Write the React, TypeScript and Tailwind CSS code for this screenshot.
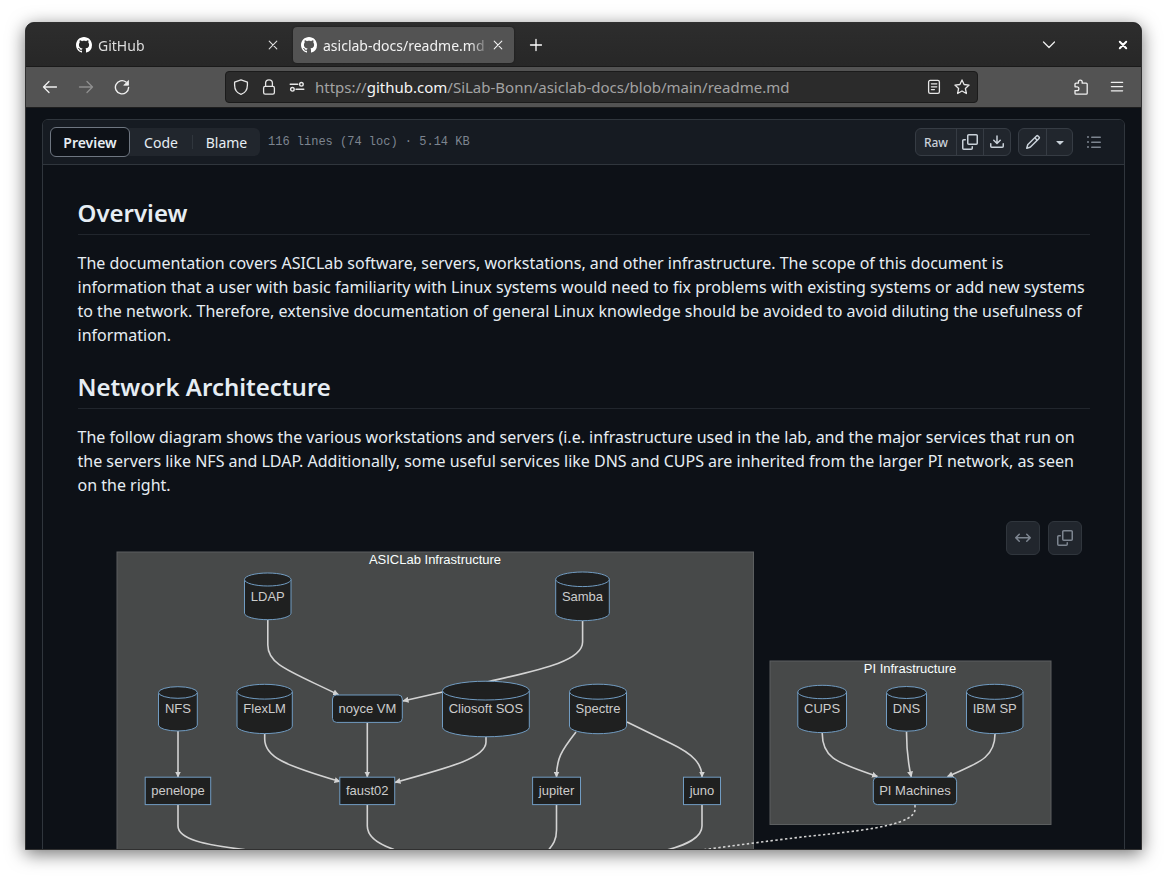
import type { ReactNode } from "react";

const OCTICONS = {
  github:
    "M8 0C3.58 0 0 3.58 0 8c0 3.54 2.29 6.53 5.47 7.59.4.07.55-.17.55-.38 0-.19-.01-.82-.01-1.49-2.01.37-2.53-.49-2.69-.94-.09-.23-.48-.94-.82-1.13-.28-.15-.68-.52-.01-.53.63-.01 1.08.58 1.23.82.72 1.21 1.87.87 2.33.66.07-.52.28-.87.51-1.07-1.78-.2-3.64-.89-3.64-3.95 0-.87.31-1.59.82-2.15-.08-.2-.36-1.02.08-2.12 0 0 .67-.21 2.2.82.64-.18 1.32-.27 2-.27.68 0 1.36.09 2 .27 1.53-1.04 2.2-.82 2.2-.82.44 1.1.16 1.92.08 2.12.51.56.82 1.27.82 2.15 0 3.07-1.87 3.75-3.65 3.95.29.25.54.73.54 1.48 0 1.07-.01 1.93-.01 2.2 0 .21.15.46.55.38A8.01 8.01 0 0 0 16 8c0-4.42-3.58-8-8-8z",
  copy: "M0 6.75C0 5.784.784 5 1.75 5h1.5a.75.75 0 0 1 0 1.5h-1.5a.25.25 0 0 0-.25.25v7.5c0 .138.112.25.25.25h7.5a.25.25 0 0 0 .25-.25v-1.5a.75.75 0 0 1 1.5 0v1.5A1.75 1.75 0 0 1 9.25 16h-7.5A1.75 1.75 0 0 1 0 14.25ZM5 1.75C5 .784 5.784 0 6.75 0h7.5C15.216 0 16 .784 16 1.75v7.5A1.75 1.75 0 0 1 14.25 11h-7.5A1.75 1.75 0 0 1 5 9.25Zm1.75-.25a.25.25 0 0 0-.25.25v7.5c0 .138.112.25.25.25h7.5a.25.25 0 0 0 .25-.25v-7.5a.25.25 0 0 0-.25-.25Z",
  download:
    "M2.75 14A1.75 1.75 0 0 1 1 12.25v-2.5a.75.75 0 0 1 1.5 0v2.5c0 .138.112.25.25.25h10.5a.25.25 0 0 0 .25-.25v-2.5a.75.75 0 0 1 1.5 0v2.5A1.75 1.75 0 0 1 13.25 14ZM7.25 7.689V2a.75.75 0 0 1 1.5 0v5.689l1.97-1.969a.749.749 0 1 1 1.06 1.06l-3.25 3.25a.749.749 0 0 1-1.06 0L4.22 6.78a.749.749 0 1 1 1.06-1.06l1.97 1.969Z",
  pencil:
    "M11.013 1.427a1.75 1.75 0 0 1 2.474 0l1.086 1.086a1.75 1.75 0 0 1 0 2.474l-8.61 8.61c-.21.21-.47.364-.756.445l-3.251.93a.75.75 0 0 1-.927-.928l.929-3.25c.081-.286.235-.547.445-.758l8.61-8.61Zm.176 4.823L9.75 4.81l-6.286 6.287a.253.253 0 0 0-.064.108l-.558 1.953 1.953-.558a.253.253 0 0 0 .108-.064Zm1.238-3.763a.25.25 0 0 0-.354 0L10.811 3.75l1.439 1.44 1.263-1.263a.25.25 0 0 0 0-.354Z",
  triangleDown:
    "m4.427 7.427 3.396 3.396a.25.25 0 0 0 .354 0l3.396-3.396A.25.25 0 0 0 11.396 7H4.604a.25.25 0 0 0-.177.427Z",
  list: "M5.75 2.5h8.5a.75.75 0 0 1 0 1.5h-8.5a.75.75 0 0 1 0-1.5Zm0 5h8.5a.75.75 0 0 1 0 1.5h-8.5a.75.75 0 0 1 0-1.5Zm0 5h8.5a.75.75 0 0 1 0 1.5h-8.5a.75.75 0 0 1 0-1.5ZM2 14a1 1 0 1 1 0-2 1 1 0 0 1 0 2Zm1-6a1 1 0 1 1-2 0 1 1 0 0 1 2 0ZM2 4a1 1 0 1 1 0-2 1 1 0 0 1 0 2Z",
  arrowBoth:
    "M3.72 3.72a.75.75 0 0 1 1.06 1.06L2.56 7h10.88l-2.22-2.22a.75.75 0 0 1 1.06-1.06l3.5 3.5a.75.75 0 0 1 0 1.06l-3.5 3.5a.75.75 0 0 1-1.06-1.06l2.22-2.22H2.56l2.22 2.22a.75.75 0 1 1-1.06 1.06l-3.5-3.5a.75.75 0 0 1 0-1.06Z",
};

function Octicon({ name }: { name: keyof typeof OCTICONS }) {
  return (
    <svg viewBox="0 0 16 16" className="size-4 shrink-0 fill-current" aria-hidden="true">
      <path d={OCTICONS[name]} />
    </svg>
  );
}

function Stroke({ children, width = 1.2 }: { children: ReactNode; width?: number }) {
  return (
    <svg
      viewBox="0 0 16 16"
      className="size-4 shrink-0"
      fill="none"
      stroke="currentColor"
      strokeWidth={width}
      strokeLinecap="round"
      strokeLinejoin="round"
      aria-hidden="true"
    >
      {children}
    </svg>
  );
}

function IconButton({ label, className, children }: { label: string; className: string; children: ReactNode }) {
  return (
    <button type="button" aria-label={label} className={`flex shrink-0 items-center justify-center ${className}`}>
      {children}
    </button>
  );
}

function BrowserTab({ title, active = false }: { title: string; active?: boolean }) {
  return (
    <div
      className={`flex h-9 w-[221px] items-center rounded pr-2 pl-2 ${
        active ? "bg-[#535353] text-[#f2f2f2] shadow-[0_0_2px_rgba(0,0,0,0.5)]" : "text-[#dedede]"
      }`}
    >
      <button type="button" className="flex min-w-0 flex-1 items-center gap-1.5 text-left">
        <span className="text-white">
          <Octicon name="github" />
        </span>
        <span className="min-w-0 flex-1 overflow-hidden pt-0.5 whitespace-nowrap [mask-image:linear-gradient(to_left,transparent,black_20px)]">
          {title}
        </span>
      </button>
      <IconButton label={`Close ${title}`} className="size-4">
        <Stroke width={1.1}>
          <path d="M4.2 4.2l7.6 7.6M11.8 4.2l-7.6 7.6" />
        </Stroke>
      </IconButton>
    </div>
  );
}

function TabStrip() {
  return (
    <div className="flex h-11 items-center gap-1 border-b border-[#1a1a1a] bg-linear-to-b from-[#2d2d2d] to-[#272727] pl-[42px] text-sm">
      <BrowserTab title="GitHub" />
      <BrowserTab title="asiclab-docs/readme.md at main" active />
      <IconButton label="New tab" className="size-9 text-white">
        <Stroke width={1.3}>
          <path d="M8 2.5v11M2.5 8h11" />
        </Stroke>
      </IconButton>
      <IconButton label="List all tabs" className="ml-auto size-9 text-[#ececec]">
        <Stroke width={1.3}>
          <path d="M2.5 5L8 10.5 13.5 5" />
        </Stroke>
      </IconButton>
      <IconButton label="Close window" className="ml-[34px] size-9 text-white">
        <Stroke width={2}>
          <path d="M4.8 4.8l6.4 6.4M11.2 4.8l-6.4 6.4" />
        </Stroke>
      </IconButton>
    </div>
  );
}

function AddressBar() {
  return (
    <div className="mx-[85px] flex h-8 min-w-0 flex-1 items-center rounded border border-[#1b1b1b] bg-[#2b2b2b] px-px text-[#e6e6e6]">
      <IconButton label="Tracking protection" className="size-7">
        <Stroke width={1.3}>
          <path d="M8 .8L14.4 3.2V6C14.4 10.5 12 14 8 15.3 4 14 1.6 10.5 1.6 6V3.2Z" />
        </Stroke>
      </IconButton>
      <IconButton label="Site security" className="size-7">
        <Stroke width={1.3}>
          <rect x="2.6" y="7.4" width="10.8" height="7.8" rx="1.6" />
          <path d="M4.6 7.4V4.2a3.4 3.4 0 0 1 6.8 0V7.4" />
        </Stroke>
      </IconButton>
      <IconButton label="Site permissions" className="size-7">
        <Stroke width={1.4}>
          <path d="M1.2 5.3H8.8M7 10.3h7.8" />
          <circle cx="12.4" cy="5.3" r="1.8" />
          <circle cx="3.4" cy="10.3" r="1.8" />
        </Stroke>
      </IconButton>
      <div className="relative ml-1 min-w-0 flex-1 text-[15px] leading-6">
        <input
          type="text"
          aria-label="Address"
          defaultValue="https://github.com/SiLab-Bonn/asiclab-docs/blob/main/readme.md"
          className="peer block w-full bg-transparent text-transparent outline-none focus:text-white"
        />
        <div
          aria-hidden="true"
          className="pointer-events-none absolute inset-0 overflow-hidden whitespace-nowrap text-[#a3a3a3] peer-focus:hidden"
        >
          https://<span className="text-[#f5f5f5]">github.com</span>/SiLab-Bonn/asiclab-docs/blob/main/readme.md
        </div>
      </div>
      <IconButton label="Reader view" className="size-7">
        <Stroke width={1.3}>
          <rect x="2.6" y="1.4" width="10.8" height="13" rx="1.6" />
          <path d="M5.4 4.8h5.4M5.4 7.8h5.4M5.4 10.6h3" />
        </Stroke>
      </IconButton>
      <IconButton label="Bookmark this page" className="size-7">
        <Stroke width={1.3}>
          <path d="M8 .9l2.1 4.6 5 .6-3.7 3.4 1 5L8 12l-4.4 2.5 1-5L.9 6.1l5-.6Z" />
        </Stroke>
      </IconButton>
    </div>
  );
}

function Toolbar() {
  return (
    <div className="flex h-[41px] items-center border-b border-[#1e1e1e] bg-[#535353] px-1.5 text-[#f0f0f0]">
      <IconButton label="Back" className="size-9">
        <Stroke width={1.3}>
          <path d="M14.5 8H1.5M7 2.5L1.5 8 7 13.5" />
        </Stroke>
      </IconButton>
      <IconButton label="Forward" className="size-9 text-[#8f8f8f]">
        <Stroke width={1.3}>
          <path d="M1.5 8h13M9 2.5L14.5 8 9 13.5" />
        </Stroke>
      </IconButton>
      <IconButton label="Reload" className="size-9">
        <Stroke width={1.4}>
          <path d="M14.6 8.4A6.6 6.6 0 1 1 12 3" />
          <path d="M14.5 1.8V6.2H10.1Z" fill="currentColor" strokeWidth="0.8" />
        </Stroke>
      </IconButton>
      <AddressBar />
      <IconButton label="Extensions" className="size-9">
        <Stroke width={1.3}>
          <path d="M2 7.3V5.2A1 1 0 0 1 3 4.2H5.4V3a1.9 1.9 0 0 1 3.8 0V4.2H13.2A1 1 0 0 1 14.2 5.2V14.2A1 1 0 0 1 13.2 15.2H3A1 1 0 0 1 2 14.2V11.6H4A1.9 1.9 0 0 0 4 7.8H2Z" />
        </Stroke>
      </IconButton>
      <IconButton label="Open application menu" className="size-9">
        <Stroke width={1.3}>
          <path d="M2.4 3.4h11.2M2.4 7.6h11.2M2.4 11.8h11.2" />
        </Stroke>
      </IconButton>
    </div>
  );
}

function FileHeader() {
  return (
    <div className="flex h-[45px] items-center border-b border-[#30363d] bg-[#161b22] pr-4 pl-[7px]">
      <div className="flex h-7 items-center rounded-md bg-[#21262d] text-sm text-[#e6edf3]">
        <button
          type="button"
          className="h-[30px] w-20 rounded-md border border-[#6e7681] bg-[#0d1117] pt-0.5 text-center font-semibold"
        >
          Preview
        </button>
        <button type="button" className="w-[62px] pt-0.5 text-center">
          Code
        </button>
        <span className="h-3.5 w-px bg-[#30363d]" />
        <button type="button" className="w-[67px] pt-0.5 text-center">
          Blame
        </button>
      </div>
      <span className="ml-2 font-['Liberation_Mono',monospace] text-xs text-[#7d8590]">
        116 lines (74 loc) · 5.14 KB
      </span>
      <div className="ml-auto flex h-7 divide-x divide-[#363c44] rounded-md border border-[#363c44] bg-[#21262d] text-[#c9d1d9]">
        <button type="button" className="w-[41px] pt-0.5 text-center text-xs font-medium">
          Raw
        </button>
        <IconButton label="Copy raw file" className="w-[27px]">
          <Octicon name="copy" />
        </IconButton>
        <IconButton label="Download raw file" className="w-[26px]">
          <Octicon name="download" />
        </IconButton>
      </div>
      <div className="ml-[7px] flex h-7 divide-x divide-[#363c44] rounded-md border border-[#363c44] bg-[#21262d] text-[#c9d1d9]">
        <IconButton label="Edit file" className="w-7">
          <Octicon name="pencil" />
        </IconButton>
        <IconButton label="More edit options" className="w-[25px]">
          <Octicon name="triangleDown" />
        </IconButton>
      </div>
      <IconButton label="Outline" className="ml-[7px] size-7 text-[#7d8590]">
        <Octicon name="list" />
      </IconButton>
    </div>
  );
}

type Cylinder = { label: string; left: number; right: number; top: number; ry: number; bottom: number; text: number };
type Box = { label: string; left: number; right: number; top: number; rx: number };

const CYLINDERS: Cylinder[] = [
  { label: "LDAP", left: 244.5, right: 291, top: 573, ry: 6.5, bottom: 619.7, text: 601 },
  { label: "Samba", left: 555.7, right: 609.3, top: 572, ry: 7.3, bottom: 620.7, text: 601 },
  { label: "NFS", left: 158.5, right: 197.3, top: 686.7, ry: 5.8, bottom: 731, text: 713 },
  { label: "FlexLM", left: 237, right: 292.3, top: 684.3, ry: 7.4, bottom: 733.6, text: 713 },
  { label: "Cliosoft SOS", left: 442.5, right: 529.3, top: 681.2, ry: 9.4, bottom: 736.8, text: 713 },
  { label: "Spectre", left: 569.5, right: 626.5, top: 684.2, ry: 7.5, bottom: 733.7, text: 713 },
  { label: "CUPS", left: 797.8, right: 846.5, top: 685.3, ry: 6.7, bottom: 732.6, text: 713 },
  { label: "DNS", left: 886.5, right: 926.5, top: 686.5, ry: 6, bottom: 731.2, text: 713 },
  { label: "IBM SP", left: 966.5, right: 1023, top: 684.3, ry: 7.5, bottom: 733.6, text: 713 },
];

const BOXES: Box[] = [
  { label: "noyce VM", left: 332.5, right: 402.3, top: 695, rx: 4 },
  { label: "penelope", left: 145.2, right: 210.7, top: 777.2, rx: 0 },
  { label: "faust02", left: 339.8, right: 394.7, top: 777.2, rx: 0 },
  { label: "jupiter", left: 532.6, right: 580.5, top: 777.2, rx: 0 },
  { label: "juno", left: 683.5, right: 720.5, top: 777.2, rx: 0 },
  { label: "PI Machines", left: 873.3, right: 956.6, top: 777.2, rx: 4 },
];

const ARROWS = [
  "M267.8 620V645C267.8 665 290 671 338.5 694.8",
  "M582.6 621V642C582.6 661 541 669.5 489 681.5L403 701",
  "M178 731V777",
  "M264.7 734V739C264.7 757 284 765 340 781.6",
  "M367.3 723V777",
  "M486 737V742C486 757 455 766 395 782.4",
  "M576 732C561 751 556.5 759 556.5 777",
  "M627 722L670 743C694 754.5 702 764 702 777",
  "M822.2 733C822.2 760 840 763 877.5 776.6",
  "M906.5 731.5C906.5 750 908 763 911.3 777",
  "M995 734C995 760 974 764 947.5 776.6",
];

const LINES = [
  "M178 805V826C178 839 205 845 244 849.5C285 854 330 862 360 880",
  "M367.3 805V826C367.3 837 378 844 394 849.5L440 864",
  "M556.5 805V830C556.5 840 553 845 548 850.5L530 868",
  "M702 805V826C702 838 686 845 665 850.5L600 868",
];

function Diagram() {
  return (
    <svg
      viewBox="78 513 1012 400"
      className="block w-full font-['Liberation_Sans',sans-serif]"
      role="img"
      aria-label="Network architecture"
      fontSize="13"
      textAnchor="middle"
    >
      <defs>
        <marker
          id="head"
          viewBox="0 0 6 6"
          refX="5.5"
          refY="3"
          markerWidth="6"
          markerHeight="6"
          markerUnits="userSpaceOnUse"
          orient="auto"
        >
          <path d="M0 0L6 3L0 6Z" fill="#d3d3d3" />
        </marker>
      </defs>
      <g fill="#474949" stroke="#5c5f60" strokeWidth="1">
        <rect x="117" y="552" width="636.5" height="340" />
        <rect x="770" y="661" width="281" height="163.5" />
      </g>
      <g fill="none" stroke="#d3d3d3" strokeWidth="1.6">
        {ARROWS.map((d) => (
          <path key={d} d={d} markerEnd="url(#head)" />
        ))}
        {LINES.map((d) => (
          <path key={d} d={d} />
        ))}
        <path
          d="M915 805V809C915 824 870 829.5 830 834C790 838 750 843.5 705 849.5L650 858"
          strokeDasharray="2.4"
        />
      </g>
      <g fill="#1f2020" stroke="#719cc2" strokeWidth="1">
        {CYLINDERS.map(({ label, left, right, top, ry, bottom }) => {
          const rx = (right - left) / 2;
          return (
            <g key={label}>
              <path
                d={`M${left} ${top + ry}A${rx} ${ry} 0 0 1 ${right} ${top + ry}V${bottom - ry}A${rx} ${ry} 0 0 1 ${left} ${bottom - ry}Z`}
              />
              <path d={`M${left} ${top + ry}A${rx} ${ry} 0 0 0 ${right} ${top + ry}`} />
            </g>
          );
        })}
        {BOXES.map(({ label, left, right, top, rx }) => (
          <rect key={label} x={left} y={top} width={right - left} height="27.4" rx={rx} />
        ))}
      </g>
      <g fill="#cccccc">
        {CYLINDERS.map(({ label, left, right, text }) => (
          <text key={label} x={(left + right) / 2} y={text}>
            {label}
          </text>
        ))}
        {BOXES.map(({ label, left, right, top }) => (
          <text key={label} x={(left + right) / 2} y={top + 18}>
            {label}
          </text>
        ))}
      </g>
      <g fill="#f9fffe">
        <text x="435" y="564">
          ASICLab Infrastructure
        </text>
        <text x="910" y="673">
          PI Infrastructure
        </text>
      </g>
    </svg>
  );
}

function SectionHeading({ children }: { children: ReactNode }) {
  return (
    <h2 className="mb-4 border-b border-[#21262d] pb-[5px] text-2xl leading-8 font-semibold">{children}</h2>
  );
}

function Readme() {
  return (
    <article className="mx-auto max-w-[1012px] pt-8 text-base leading-6 text-[#e6edf3]">
      <SectionHeading>Overview</SectionHeading>
      <p className="mb-6">
        The documentation covers ASICLab software, servers, workstations, and other infrastructure. The scope of this
        document is information that a user with basic familiarity with Linux systems would need to fix problems with
        existing systems or add new systems to the network. Therefore, extensive documentation of general Linux
        knowledge should be avoided to avoid diluting the usefulness of information.
      </p>
      <SectionHeading>Network Architecture</SectionHeading>
      <p className="mb-4">
        The follow diagram shows the various workstations and servers (i.e. infrastructure used in the lab, and the
        major services that run on the servers like NFS and LDAP. Additionally, some useful services like DNS and CUPS
        are inherited from the larger PI network, as seen on the right.
      </p>
      <div className="relative">
        <Diagram />
        <div className="absolute top-2 right-2 flex gap-2 text-[#7d8590]">
          <IconButton label="Expand diagram" className="size-[34px] rounded-md border border-[#30363d] bg-[#21262d]">
            <Octicon name="arrowBoth" />
          </IconButton>
          <IconButton label="Copy diagram" className="size-[34px] rounded-md border border-[#30363d] bg-[#21262d]">
            <Octicon name="copy" />
          </IconButton>
        </div>
      </div>
    </article>
  );
}

export default function App() {
  return (
    <div className="flex h-screen flex-col bg-white px-[25px] pt-[22px] pb-7 font-['Noto_Sans',sans-serif]">
      <div className="flex min-h-0 flex-1 flex-col overflow-hidden rounded-t-[9px] border border-[#303030] bg-[#0d1117] shadow-[0_4px_18px_rgba(0,0,0,0.55)]">
        <TabStrip />
        <Toolbar />
        <main className="min-h-0 flex-1 overflow-hidden px-4 pt-[11px]">
          <section className="overflow-hidden rounded-t-md border border-[#30363d]">
            <FileHeader />
            <Readme />
          </section>
        </main>
      </div>
    </div>
  );
}
